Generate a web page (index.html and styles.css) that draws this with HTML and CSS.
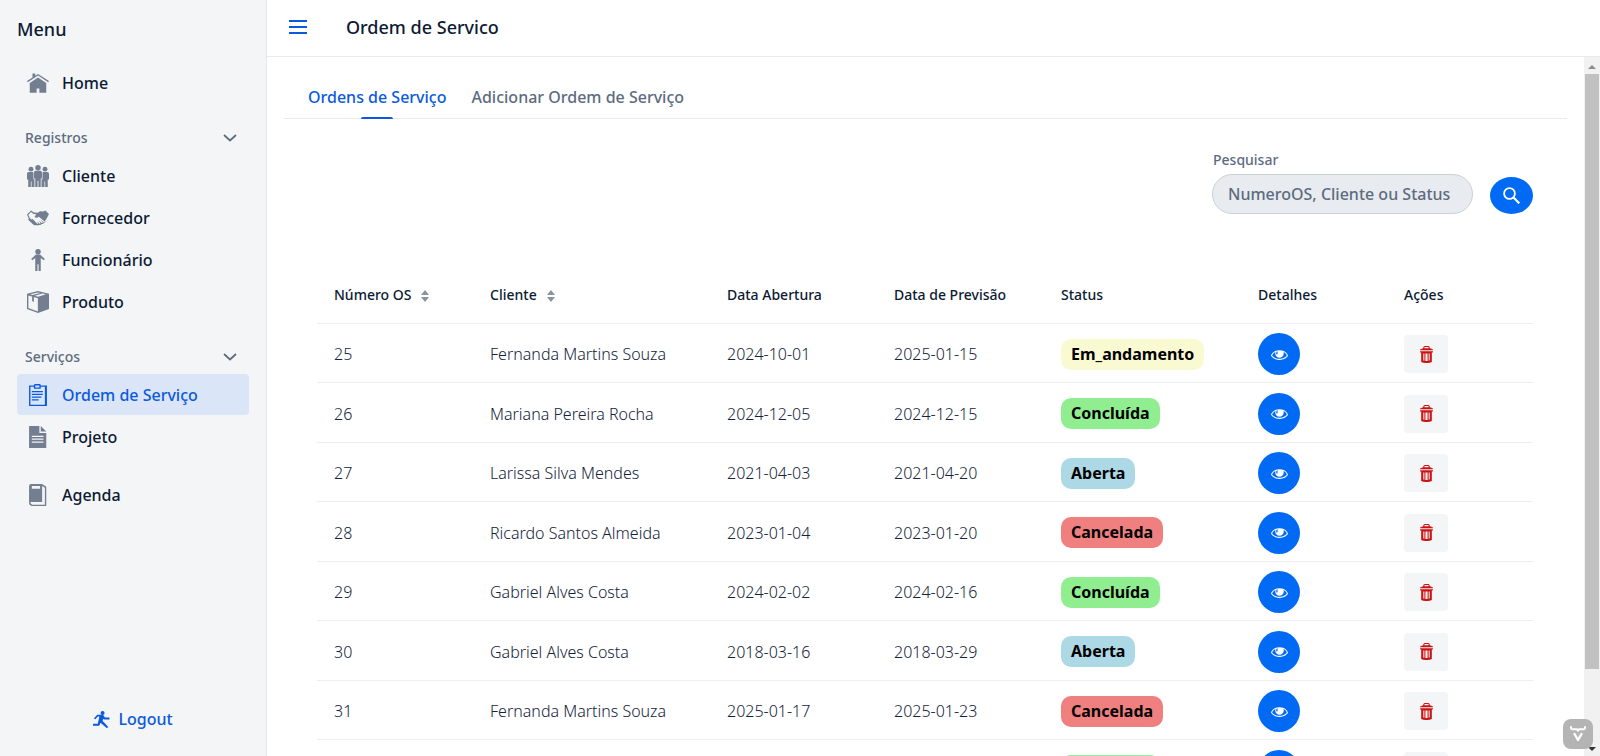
FILE: index.html
```html
<!DOCTYPE html>
<html lang="pt">
<head>
<meta charset="utf-8">
<title>Ordem de Servico</title>
<link rel="stylesheet" href="styles.css">
</head>
<body>
<svg class="defs" aria-hidden="true">
  <symbol id="eye" viewBox="0 0 16 16"><path d="M8 3.9c-6.7 0-8 5.1-8 5.1s2.2 4.1 7.9 4.1 8.1-4 8.1-4-1.3-5.2-8-5.2zM5.3 5.4c.5-.3 1.3-.3 1.3-.3s-.5.9-.5 1.6c0 .7.2 1.1.2 1.1l-1.1.2s-.3-.5-.3-1.2c0-.8.4-1.4.4-1.4zM7.9 12.1c-4.1 0-6.2-2.3-6.8-3.2.3-.7 1.1-2.2 3.1-3.2-.1.4-.2.8-.2 1.3 0 2.2 1.8 4 4 4s4-1.8 4-4c0-.5-.1-.9-.2-1.3 2 .9 2.8 2.5 3.1 3.2-.7.9-2.8 3.2-7 3.2z"/></symbol>
  <symbol id="trash" viewBox="0 0 16 16"><path d="M13 3s0-.51-2-.8v-.7C10.983.668 10.305 0 9.47 0h-3C5.655.017 5 .682 5 1.5v.7c-.765.068-1.452.359-2.007.806L2 3v1h12V3zM6 1.5c.005-.274.226-.495.499-.5H9.5c.274.005.495.226.5.499v.641c-.759-.076-1.64-.119-2.5-.12H6zM2 5v1h1v9c1.234.631 2.692 1 4.236 1h1.525c1.541-.029 2.99-.408 4.239-1.05V6h1V5zM6 13.92q-.51-.06-1-.17V7h1zM9 14H7V7h2zM11 13.72c-.267.07-.606.136-.95.184L10 7h1z"/></symbol>
  <symbol id="chevron" viewBox="0 0 14 8"><path d="M1 1l6 5.500L13 1" fill="none" stroke="currentColor" stroke-width="1.700"/></symbol>
  <symbol id="sort" viewBox="0 0 8 12"><path d="M4 0l4 5H0zM4 12l4-5H0z"/></symbol>
</svg>
<div class="app">
  <aside class="drawer">
    <h2 class="drawer-title">Menu</h2>
    <nav class="nav">
      <a class="item" href="#"><svg class="icon" viewBox="0 0 16 16"><path d="M8 1.400l-2 1.300V1H4v3L0 6.600l.6.800L8 2.600l7.400 4.800.6-.8zM8 4L2 8v7h5v-3h2v3h5V8z"/></svg>Home</a>
      <button class="group" type="button">Registros<svg class="chevron"><use href="#chevron"/></svg></button>
      <a class="item" href="#"><svg class="icon" viewBox="0 0 16 16"><circle cx="8" cy="2" r="2"/><circle cx="2.900" cy="3" r="1.800"/><circle cx="13.100" cy="3" r="1.800"/><path d="M6.300 4.200h3.400q1.200 0 1.200 1.200V9.800H10V16H8.300v-4.500h-.6V16H6V9.800h-.9V5.400Q5.100 4.200 6.300 4.200zM1.300 5h3q.4 0 .4 1v4.300h.7V16H3.300v-4h-.5v4H.9v-5.500H0V6.300Q0 5 1.300 5zM14.700 5h-3q-.4 0-.4 1v4.300h-.7V16h2.100v-4h.5v4h1.900v-5.500h.9V6.300Q16 5 14.700 5z"/></svg>Cliente</a>
      <a class="item" href="#"><svg class="icon" viewBox="0 0 16 16"><path d="M3 2.500L0 5.500 1.200 8.100 1 9.500l3.500 3.300q1.100 1 2 .3l1.200.4 1-.5 1.200.1.700-.8h1.100l.5-1h1l.1-1.500L14.500 8 16 5 13.300 2.500l-1.500.7-2.300-.2-1.700 1.200L5 4z"/><path fill="#f3f5f7" d="M1 5.600l2-2L4.700 5l2 .2L5.500 7.300q1.300 1.100 3.100-.2l4.500 3.700-.9.300-2.500-2 2 2.400-.9.200-2.300-1.900 1.500 2-.8.300-2-1.700 1.100 1.800-.9-.1L5 9.600 4 8.700 3 9 1.800 7.600z"/></svg>Fornecedor</a>
      <a class="item" href="#"><svg class="icon" viewBox="0 0 16 16"><circle cx="8" cy="2" r="2"/><path d="M6.500 4h3L13 7.300l-.8.900L10 6.600V16H8.400v-5h-.8v5H6V6.600L3.800 8.200 3 7.300z"/></svg>Funcionário</a>
      <a class="item" href="#"><svg class="icon" viewBox="0 0 16 16"><path fill-rule="evenodd" d="M8 0l8 2v11l-8 3-8-3V2zM1 3.300v9l6.900 2.600V5.200zM8 1L2.200 2.400 4 2.900l5.600-1.500zM11.200 1.800L5.700 3.400 8 4.100l5.800-1.700z"/><path d="M3.700 3.700l1.300.4V8l-1.300-.7z"/></svg>Produto</a>
      <button class="group" type="button">Serviços<svg class="chevron"><use href="#chevron"/></svg></button>
      <a class="item current" href="#"><svg class="icon" viewBox="0 0 16 16"><path fill-rule="evenodd" d="M5 1q0-1 1-1h3q1 0 1 1h4.500v15h-13V1zM5 2H2.500v13H13V2h-3v1.500H5zM6 1v1.500h3V1z"/><path d="M3.500 5h8v1h-8zM3.500 7h8v1h-8zM3.500 9h7v1h-7zM3.500 11h5v1h-5z"/></svg>Ordem de Serviço</a>
      <a class="item" href="#"><svg class="icon" viewBox="0 0 16 16"><path fill-rule="evenodd" d="M1.500 0H9v5h5v11H1.500zM3.500 7v1h8.500V7zM3.500 9v1h8.500V9zM3.500 11.200v1h8.500v-1z"/><path d="M10 0l4 4h-4z"/></svg>Projeto</a>
      <a class="item agenda" href="#"><svg class="icon" viewBox="0 0 16 16"><path fill-rule="evenodd" d="M3 0h8l3 2v14H4q-2.500 0-2.500-2.500V1.500Q1.500 0 3 0zM3.500 1.500v2h6v-2zM11 1.500V13H3q-.7 0-.5.700.3 1.300 1.500 1.300h9V2.800z"/></svg>Agenda</a>
    </nav>
    <button class="logout" type="button"><svg class="run" viewBox="0 0 16 16"><circle cx="9" cy="1.900" r="1.900"/><path d="M4 3.500h5.400L11.300 6l4.200.2v1.700h-4.800L9.800 7.200 9 9.300l2.200 2.200 3.300 3.700-1.600.8-4.200-3.500-1.600-1.500-1.200 2.900H0v-1.800h4.500L6 5.200H4.600L2.200 7.800.8 7z"/></svg>Logout</button>
  </aside>
  <div class="page">
    <header class="header">
      <button class="toggle" type="button" aria-label="Menu"><span></span><span></span><span></span></button>
      <h1 class="title">Ordem de Servico</h1>
    </header>
    <div class="body">
      <main class="content">
        <div class="tabs" role="tablist">
          <button class="tab selected" role="tab" aria-selected="true" type="button">Ordens de Serviço</button>
          <button class="tab" role="tab" type="button">Adicionar Ordem de Serviço</button>
        </div>
        <form class="search">
          <div class="field">
            <label for="q">Pesquisar</label>
            <input id="q" type="text" placeholder="NumeroOS, Cliente ou Status">
          </div>
          <button class="search-button" type="button" aria-label="Pesquisar"><svg viewBox="0 0 17 17"><circle cx="6.500" cy="6.500" r="5.400" fill="none" stroke="currentColor" stroke-width="1.800"/><path d="M10.300 10.300l6 6" stroke="currentColor" stroke-width="2.200"/></svg></button>
        </form>
        <table class="grid">
          <colgroup><col class="c1"><col class="c2"><col class="c3"><col class="c4"><col class="c5"><col class="c6"><col class="c7"></colgroup>
          <thead><tr><th>Número OS<svg class="sort"><use href="#sort"/></svg></th><th>Cliente<svg class="sort"><use href="#sort"/></svg></th><th>Data Abertura</th><th>Data de Previsão</th><th>Status</th><th>Detalhes</th><th>Ações</th></tr></thead>
          <tbody>
            <tr><td>25</td><td>Fernanda Martins Souza</td><td>2024-10-01</td><td>2025-01-15</td><td><span class="badge doing">Em_andamento</span></td><td><button class="view" type="button" aria-label="Detalhes"><svg><use href="#eye"/></svg></button></td><td><button class="delete" type="button" aria-label="Excluir"><svg><use href="#trash"/></svg></button></td></tr>
            <tr><td>26</td><td>Mariana Pereira Rocha</td><td>2024-12-05</td><td>2024-12-15</td><td><span class="badge done">Concluída</span></td><td><button class="view" type="button" aria-label="Detalhes"><svg><use href="#eye"/></svg></button></td><td><button class="delete" type="button" aria-label="Excluir"><svg><use href="#trash"/></svg></button></td></tr>
            <tr><td>27</td><td>Larissa Silva Mendes</td><td>2021-04-03</td><td>2021-04-20</td><td><span class="badge open">Aberta</span></td><td><button class="view" type="button" aria-label="Detalhes"><svg><use href="#eye"/></svg></button></td><td><button class="delete" type="button" aria-label="Excluir"><svg><use href="#trash"/></svg></button></td></tr>
            <tr><td>28</td><td>Ricardo Santos Almeida</td><td>2023-01-04</td><td>2023-01-20</td><td><span class="badge cancelled">Cancelada</span></td><td><button class="view" type="button" aria-label="Detalhes"><svg><use href="#eye"/></svg></button></td><td><button class="delete" type="button" aria-label="Excluir"><svg><use href="#trash"/></svg></button></td></tr>
            <tr><td>29</td><td>Gabriel Alves Costa</td><td>2024-02-02</td><td>2024-02-16</td><td><span class="badge done">Concluída</span></td><td><button class="view" type="button" aria-label="Detalhes"><svg><use href="#eye"/></svg></button></td><td><button class="delete" type="button" aria-label="Excluir"><svg><use href="#trash"/></svg></button></td></tr>
            <tr><td>30</td><td>Gabriel Alves Costa</td><td>2018-03-16</td><td>2018-03-29</td><td><span class="badge open">Aberta</span></td><td><button class="view" type="button" aria-label="Detalhes"><svg><use href="#eye"/></svg></button></td><td><button class="delete" type="button" aria-label="Excluir"><svg><use href="#trash"/></svg></button></td></tr>
            <tr><td>31</td><td>Fernanda Martins Souza</td><td>2025-01-17</td><td>2025-01-23</td><td><span class="badge cancelled">Cancelada</span></td><td><button class="view" type="button" aria-label="Detalhes"><svg><use href="#eye"/></svg></button></td><td><button class="delete" type="button" aria-label="Excluir"><svg><use href="#trash"/></svg></button></td></tr>
            <tr><td></td><td></td><td></td><td></td><td><span class="badge blank done"></span></td><td><button class="view" type="button" aria-label="Detalhes"><svg><use href="#eye"/></svg></button></td><td><button class="delete" type="button" aria-label="Excluir"><svg><use href="#trash"/></svg></button></td></tr>
          </tbody>
        </table>
      </main>
      <div class="scrollbar" aria-hidden="true">
        <svg class="arrow" viewBox="0 0 8 4"><path d="M4 0l4 4H0z"/></svg>
        <div class="track"><div class="thumb"></div></div>
        <svg class="arrow down" viewBox="0 0 8 4"><path d="M0 0h8L4 4z"/></svg>
      </div>
    </div>
  </div>
</div>
<button class="devtools" type="button" aria-label="Vaadin"><svg viewBox="0 0 30 30"><g fill="none" stroke="#fff" stroke-linecap="round" stroke-linejoin="round"><path d="M8 8v1q0 1.300 1.500 1.300h3.800q1.700 0 1.700 1.500 0-1.500 1.700-1.500h3.800Q22 10.300 22 9V8" stroke-width="2"/><path d="M11.500 15l3.500 6 3.500-6" stroke-width="2.400"/></g></svg></button>
</body>
</html>
```
FILE: styles.css
```css
* { box-sizing: border-box; }
body {
  margin: 0;
  font-family: "Noto Sans", "Open Sans", sans-serif;
  font-size: 16px;
  line-height: 24px;
  color: #14233b;
  background: #fff;
}
button, input { font: inherit; color: inherit; margin: 0; padding: 0; border: 0; background: none; }
svg { fill: currentColor; display: block; flex: none; }
.defs { position: absolute; width: 0; height: 0; }
.app { display: flex; height: 100vh; overflow: hidden; }

.drawer {
  width: 267px;
  flex: none;
  display: flex;
  flex-direction: column;
  padding: 17px 17px 25px;
  background: #f3f5f7;
  border-right: 1px solid #e5e8ec;
}
.drawer-title { margin: 0 0 21px; font-size: 18px; font-weight: 500; color: #0c1a33; }
.nav { display: flex; flex-direction: column; gap: 1px; }
.item {
  display: flex;
  align-items: center;
  gap: 13px;
  height: 41px;
  padding: 0 10px;
  border-radius: 4px;
  font-weight: 500;
  color: #0c1a33;
  text-decoration: none;
}
.icon { width: 22px; height: 22px; color: #737f90; }
.current, .current .icon { color: #0b59de; }
.current { background: #dae5f8; }
.agenda { margin-top: 16px; }
.group {
  display: flex;
  align-items: center;
  justify-content: space-between;
  height: 33px;
  margin-top: 17px;
  padding: 0 12px 0 8px;
  font-size: 14px;
  font-weight: 500;
  color: #5d6b7f;
}
.chevron { width: 14px; height: 8px; }
.logout {
  display: flex;
  align-items: center;
  align-self: center;
  gap: 8px;
  margin-top: auto;
  font-weight: 500;
  color: #0b59de;
}
.run { width: 17px; height: 17px; }

.page { flex: 1; min-width: 0; display: flex; flex-direction: column; }
.header {
  display: flex;
  align-items: center;
  flex: none;
  gap: 39px;
  height: 57px;
  padding: 0 22px 3px;
  border-bottom: 1px solid #e8eaed;
}
.toggle { display: flex; flex-direction: column; gap: 4px; width: 18px; }
.toggle span { height: 2px; background: #0b59de; }
.title { margin: 0; font-size: 18px; font-weight: 500; color: #0c1a33; }
.body { flex: 1; display: flex; min-height: 0; }
.content { flex: 1; min-width: 0; padding: 17px; overflow: hidden; }

.tabs { display: flex; gap: 25px; padding: 0 24px; border-bottom: 1px solid #e8eaed; }
.tab { position: relative; height: 44px; padding-top: 2px; font-weight: 500; color: #5d6b7f; }
.selected { color: #0b59de; }
.selected::after {
  content: "";
  position: absolute;
  left: 50%;
  bottom: -1px;
  width: 32px;
  height: 2px;
  margin-left: -16px;
  border-radius: 2px 2px 0 0;
  background: #0b59de;
}

.search { display: flex; justify-content: flex-end; align-items: flex-end; gap: 17px; padding: 29px 34px 0; }
.field { display: flex; flex-direction: column; gap: 2px; width: 261px; }
.field label { font-size: 14px; font-weight: 500; color: #5d6b7f; padding-left: 1px; }
.field input {
  width: 100%;
  height: 40px;
  padding: 0 15px;
  border: 1px solid #ccd1d7;
  border-radius: 20px;
  background: #e8ebef;
  font-weight: 500;
}
.field input::placeholder { color: #5d6b7f; opacity: 1; }
.search-button {
  display: flex;
  align-items: center;
  justify-content: center;
  width: 43px;
  height: 37px;
  border-radius: 50%;
  background: #006af5;
  color: #fff;
}
.search-button svg { width: 17px; height: 17px; }

.grid {
  width: calc(100% - 68px);
  margin: 53px 35px 0 33px;
  table-layout: fixed;
  border-collapse: separate;
  border-spacing: 0;
}
.c1 { width: 156px; }
.c2 { width: 237px; }
.c3, .c4 { width: 167px; }
.c5 { width: 197px; }
.c6, .c7 { width: 146px; }
.grid th, .grid td {
  height: 59px;
  padding: 0 17px;
  text-align: left;
  vertical-align: middle;
  white-space: nowrap;
  border-bottom: 1px solid #eceef0;
}
.grid td { padding-top: 2px; font-weight: 300; }
.grid tbody tr:nth-child(even) td { height: 60px; }
.grid th { height: 57px; font-size: 14px; font-weight: 500; color: #0c1a33; }
.sort { display: inline-block; width: 8px; height: 12px; margin-left: 10px; vertical-align: -2px; color: #8792a2; }
.badge {
  display: inline-block;
  height: 31px;
  padding: 0 10px;
  border-radius: 10px;
  line-height: 31px;
  font-weight: 700;
  color: #000;
}
.blank { width: 99px; vertical-align: middle; }
.doing { background: #fafad2; }
.done { background: #90ee90; }
.open { background: #add8e6; }
.cancelled { background: #f08080; }
.view, .delete { display: flex; align-items: center; justify-content: center; }
.view { width: 42px; height: 42px; border-radius: 50%; background: #006af5; color: #fff; }
.delete { width: 44px; height: 38px; border-radius: 4px; background: #f3f5f7; color: #cc1212; }
.view svg, .delete svg { width: 17px; height: 17px; }

.scrollbar {
  display: flex;
  flex-direction: column;
  align-items: center;
  width: 16px;
  padding: 8px 0 5px;
  background: #f1f1f1;
}
.arrow { width: 8px; height: 4px; color: #8b8b8b; }
.down { color: #333; }
.track { flex: 1; width: 14px; margin: 5px 0; }
.thumb { height: 89%; background: #c1c1c1; }
.devtools {
  position: fixed;
  right: 7px;
  bottom: 7px;
  width: 30px;
  height: 30px;
  border-radius: 8px;
  background: #b4b4b4;
}
```
